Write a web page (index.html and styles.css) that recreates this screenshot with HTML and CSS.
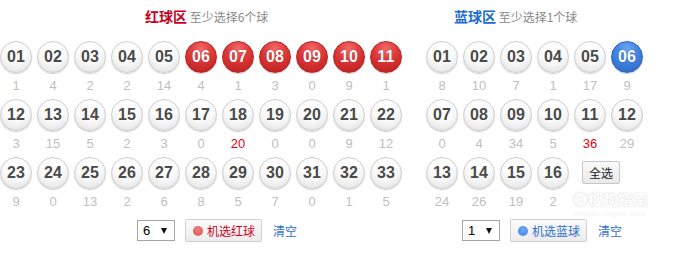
FILE: index.html
```html
<!DOCTYPE html>
<html lang="zh-CN">
<head>
<meta charset="utf-8">
<title>双色球选号</title>
<link rel="stylesheet" href="styles.css">
</head>
<body>
<div class="picker">
  <section class="zone zone-red">
    <h2 class="zone-title"><span class="zone-name red">红球区</span> 至少选择6个球</h2>
    <div class="grid grid-red">
      <div class="cell"><span class="ball">01</span><span class="miss">1</span></div>
      <div class="cell"><span class="ball">02</span><span class="miss">4</span></div>
      <div class="cell"><span class="ball">03</span><span class="miss">2</span></div>
      <div class="cell"><span class="ball">04</span><span class="miss">2</span></div>
      <div class="cell"><span class="ball">05</span><span class="miss">14</span></div>
      <div class="cell"><span class="ball on-red">06</span><span class="miss">4</span></div>
      <div class="cell"><span class="ball on-red">07</span><span class="miss">1</span></div>
      <div class="cell"><span class="ball on-red">08</span><span class="miss">3</span></div>
      <div class="cell"><span class="ball on-red">09</span><span class="miss">0</span></div>
      <div class="cell"><span class="ball on-red">10</span><span class="miss">9</span></div>
      <div class="cell"><span class="ball on-red">11</span><span class="miss">1</span></div>

      <div class="cell"><span class="ball">12</span><span class="miss">3</span></div>
      <div class="cell"><span class="ball">13</span><span class="miss">15</span></div>
      <div class="cell"><span class="ball">14</span><span class="miss">5</span></div>
      <div class="cell"><span class="ball">15</span><span class="miss">2</span></div>
      <div class="cell"><span class="ball">16</span><span class="miss">3</span></div>
      <div class="cell"><span class="ball">17</span><span class="miss">0</span></div>
      <div class="cell"><span class="ball">18</span><span class="miss hot">20</span></div>
      <div class="cell"><span class="ball">19</span><span class="miss">0</span></div>
      <div class="cell"><span class="ball">20</span><span class="miss">0</span></div>
      <div class="cell"><span class="ball">21</span><span class="miss">9</span></div>
      <div class="cell"><span class="ball">22</span><span class="miss">12</span></div>

      <div class="cell"><span class="ball">23</span><span class="miss">9</span></div>
      <div class="cell"><span class="ball">24</span><span class="miss">0</span></div>
      <div class="cell"><span class="ball">25</span><span class="miss">13</span></div>
      <div class="cell"><span class="ball">26</span><span class="miss">2</span></div>
      <div class="cell"><span class="ball">27</span><span class="miss">6</span></div>
      <div class="cell"><span class="ball">28</span><span class="miss">8</span></div>
      <div class="cell"><span class="ball">29</span><span class="miss">5</span></div>
      <div class="cell"><span class="ball">30</span><span class="miss">7</span></div>
      <div class="cell"><span class="ball">31</span><span class="miss">0</span></div>
      <div class="cell"><span class="ball">32</span><span class="miss">1</span></div>
      <div class="cell"><span class="ball">33</span><span class="miss">5</span></div>
    </div>
    <div class="controls controls-red">
      <span class="fake-select"><span class="sel-val">6</span><span class="sel-arrow"></span></span>
      <button class="rand-btn red-text"><span class="dot dot-red"></span>机选红球</button>
      <a class="clear-link">清空</a>
    </div>
  </section>

  <section class="zone zone-blue">
    <h2 class="zone-title"><span class="zone-name blue">蓝球区</span> 至少选择1个球</h2>
    <div class="grid grid-blue">
      <div class="cell"><span class="ball">01</span><span class="miss">8</span></div>
      <div class="cell"><span class="ball">02</span><span class="miss">10</span></div>
      <div class="cell"><span class="ball">03</span><span class="miss">7</span></div>
      <div class="cell"><span class="ball">04</span><span class="miss">1</span></div>
      <div class="cell"><span class="ball">05</span><span class="miss">17</span></div>
      <div class="cell"><span class="ball on-blue">06</span><span class="miss">9</span></div>

      <div class="cell"><span class="ball">07</span><span class="miss">0</span></div>
      <div class="cell"><span class="ball">08</span><span class="miss">4</span></div>
      <div class="cell"><span class="ball">09</span><span class="miss">34</span></div>
      <div class="cell"><span class="ball">10</span><span class="miss">5</span></div>
      <div class="cell"><span class="ball">11</span><span class="miss hot">36</span></div>
      <div class="cell"><span class="ball">12</span><span class="miss">29</span></div>

      <div class="cell"><span class="ball">13</span><span class="miss">24</span></div>
      <div class="cell"><span class="ball">14</span><span class="miss">26</span></div>
      <div class="cell"><span class="ball">15</span><span class="miss">19</span></div>
      <div class="cell"><span class="ball">16</span><span class="miss">2</span></div>
      <div class="cell cell-btn"><button class="all-btn">全选</button></div>
    </div>
    <div class="controls controls-blue">
      <span class="fake-select"><span class="sel-val">1</span><span class="sel-arrow"></span></span>
      <button class="rand-btn blue-text"><span class="dot dot-blue"></span>机选蓝球</button>
      <a class="clear-link">清空</a>
    </div>
  </section>

  <div class="watermark"><span class="wm-main">Ⓢ搜狗指南</span><span class="wm-sub">zhinan.sogou.com</span></div>
</div>
</body>
</html>
```

FILE: styles.css
```css
* { box-sizing: border-box; }

html, body {
  margin: 0;
  padding: 0;
  background: #fff;
}

body {
  font-family: "Noto Sans CJK SC", "Liberation Sans", sans-serif;
  font-size: 12px;
  color: #888;
}

.picker {
  position: relative;
  display: flex;
  width: 675px;
  height: 258px;
  overflow: hidden;
}

.zone-red { width: 426px; }
.zone-blue { flex: 1; }

.zone-title {
  margin: 6px 0 0;
  height: 20px;
  line-height: 20px;
  font-size: 12px;
  font-weight: normal;
  color: #888;
  white-space: nowrap;
}

.zone-red .zone-title { padding-left: 145px; }
.zone-blue .zone-title { padding-left: 28px; }

.zone-name {
  font-size: 14px;
  font-weight: bold;
}
.zone-name.red { color: #c8001e; }
.zone-name.blue { color: #1a6cd0; }

.grid {
  display: grid;
  grid-template-columns: repeat(11, 32px);
  column-gap: 5px;
  margin-top: 15px;
}
.grid-blue { grid-template-columns: repeat(6, 32px); }

.cell {
  display: flex;
  flex-direction: column;
  align-items: center;
  height: 58px;
}

.ball {
  display: flex;
  align-items: center;
  justify-content: center;
  width: 32px;
  height: 32px;
  border-radius: 50%;
  border: 1px solid #cfcfcf;
  background: radial-gradient(circle at 50% 28%, #ffffff 0%, #fbfbfb 45%, #e6e6e6 85%, #dadada 100%);
  box-shadow: 0 1px 1px rgba(0, 0, 0, 0.18);
  font-family: "Liberation Sans", Arial, sans-serif;
  font-weight: bold;
  font-size: 16px;
  color: #4a4a4a;
  letter-spacing: 0.2px;
}

.ball.on-red {
  border-color: #b52626;
  background: radial-gradient(circle at 50% 22%, #f26a6a 0%, #de3a3a 40%, #c82828 75%, #b21c1c 100%);
  color: #fff;
  text-shadow: 0 0 1px rgba(120, 0, 0, 0.6);
}

.ball.on-blue {
  border-color: #2c64c0;
  background: radial-gradient(circle at 50% 22%, #6aa5f0 0%, #4385e0 40%, #3473d2 75%, #2a60bd 100%);
  color: #fff;
  text-shadow: 0 0 1px rgba(0, 30, 100, 0.6);
}

.miss {
  margin-top: 4px;
  height: 18px;
  line-height: 18px;
  font-family: "Liberation Sans", Arial, sans-serif;
  font-size: 13px;
  color: #c0c0c0;
}
.miss.hot { color: #e60012; }

.cell-btn {
  align-items: flex-start;
}

.all-btn {
  margin: 4px 0 0 8px;
  width: 38px;
  height: 23px;
  padding: 0;
  border: 1px solid #c8c8c8;
  border-radius: 2px;
  background: linear-gradient(#fafafa, #e9e9e9);
  font-family: "Noto Sans CJK SC", sans-serif;
  font-size: 12px;
  color: #222;
  flex-shrink: 0;
}

.controls {
  display: flex;
  align-items: center;
  gap: 10px;
  margin-top: 4px;
  height: 23px;
}
.controls-red { padding-left: 137px; }
.controls-blue { padding-left: 36px; }

.fake-select {
  display: flex;
  align-items: center;
  justify-content: space-between;
  width: 38px;
  height: 21px;
  padding: 0 7px 0 5px;
  border: 1px solid #a6a6a6;
  background: #fff;
  font-family: "Liberation Sans", Arial, sans-serif;
  font-size: 13px;
  color: #000;
}

.sel-arrow {
  width: 0;
  height: 0;
  border-left: 3.5px solid transparent;
  border-right: 3.5px solid transparent;
  border-top: 6px solid #111;
}

.rand-btn {
  display: flex;
  align-items: center;
  gap: 4px;
  width: 77px;
  height: 23px;
  padding: 0 0 0 7px;
  border: 1px solid #cfcfcf;
  border-radius: 2px;
  background: linear-gradient(#fbfbfb, #ececec);
  font-family: "Noto Sans CJK SC", sans-serif;
  font-size: 12px;
}
.red-text { color: #d0021b; }
.blue-text { color: #2f6fce; }

.dot {
  width: 10px;
  height: 10px;
  border-radius: 50%;
}
.dot-red { background: radial-gradient(circle at 50% 35%, #f08080, #dc5050); }
.dot-blue { background: radial-gradient(circle at 50% 35%, #6ea8f6, #3f82ea); }

.clear-link {
  margin-left: 1px;
  font-size: 12px;
  line-height: 12px;
  color: #2f6fce;
  cursor: pointer;
}

.watermark {
  position: absolute;
  left: 573px;
  top: 190px;
  display: flex;
  flex-direction: column;
  align-items: flex-start;
  gap: 2px;
  color: #fff;
  pointer-events: none;
}
.wm-main {
  font-size: 15px;
  font-weight: bold;
  line-height: 17px;
  text-shadow: 0 0 1px #d6d6d6, 0 0 1px #d6d6d6;
}
.wm-sub {
  font-family: "Liberation Sans", Arial, sans-serif;
  font-size: 8px;
  line-height: 9px;
  letter-spacing: 0.5px;
  text-shadow: 0 0 1px #e0e0e0;
}
```
